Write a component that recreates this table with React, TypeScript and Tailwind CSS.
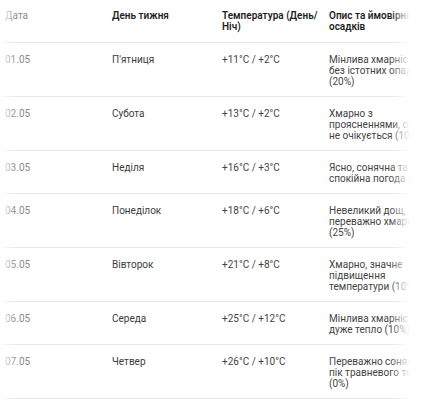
const rows = [
  { date: "01.05", day: "П'ятниця", temp: "+11°C / +2°C", desc: "Мінлива хмарність без істотних опадів (20%)" },
  { date: "02.05", day: "Субота", temp: "+13°C / +2°C", desc: "Хмарно з проясненнями, опадів не очікується (10%)" },
  { date: "03.05", day: "Неділя", temp: "+16°C / +3°C", desc: "Ясно, сонячна та спокійна погода (10%)" },
  { date: "04.05", day: "Понеділок", temp: "+18°C / +6°C", desc: "Невеликий дощ, переважно хмарно (25%)" },
  { date: "05.05", day: "Вівторок", temp: "+21°C / +8°C", desc: "Хмарно, значне підвищення температури (10%)" },
  { date: "06.05", day: "Середа", temp: "+25°C / +12°C", desc: "Мінлива хмарність, дуже тепло (10%)" },
  { date: "07.05", day: "Четвер", temp: "+26°C / +10°C", desc: "Переважно сонячно, пік травневого тепла (0%)" },
]

export default function App() {
  return (
    <div className="w-[428px] h-[404px] bg-white pr-[18px] overflow-hidden" style={{ fontFamily: "Roboto, 'Noto Sans', sans-serif" }}>
      <div className="relative overflow-hidden">
        <table className="table-fixed border-collapse w-[445px] text-[10px] leading-[11px] text-left">
          <colgroup>
            <col className="w-[112px]" />
            <col className="w-[110px]" />
            <col className="w-[107px]" />
            <col className="w-[116px]" />
          </colgroup>
          <thead>
            <tr className="border-b border-[#e6e6e6]">
              <th className="pl-[5px] pr-[10px] py-[10px] align-top font-normal text-[#8a8a8a]">Дата</th>
              <th className="pr-[10px] py-[10px] align-top font-semibold text-[#1f1f1f]">День тижня</th>
              <th className="pr-[10px] py-[10px] align-top font-semibold text-[#1f1f1f]">Температура (День/<wbr />Ніч)</th>
              <th className="pr-[10px] py-[10px] align-top font-semibold text-[#1f1f1f]">Опис та ймовірність осадків</th>
            </tr>
          </thead>
          <tbody>
            {rows.map(r => (
              <tr key={r.date} className="border-b border-[#e6e6e6]">
                <td className="pl-[5px] pr-[10px] pt-[11px] pb-[9px] align-top text-[#8a8a8a]">{r.date}</td>
                <td className="pr-[10px] pt-[11px] pb-[9px] align-top text-[#3c3c3c]">{r.day}</td>
                <td className="pr-[10px] pt-[11px] pb-[9px] align-top text-[#444]">{r.temp}</td>
                <td className="pr-[10px] pt-[11px] pb-[9px] align-top text-[#444]">{r.desc}</td>
              </tr>
            ))}
          </tbody>
        </table>
        <div className="absolute inset-y-0 left-0 w-[16px] bg-gradient-to-r from-white to-transparent" />
        <div className="absolute inset-y-0 right-0 w-[20px] bg-gradient-to-l from-white to-transparent" />
      </div>
    </div>
  )
}
